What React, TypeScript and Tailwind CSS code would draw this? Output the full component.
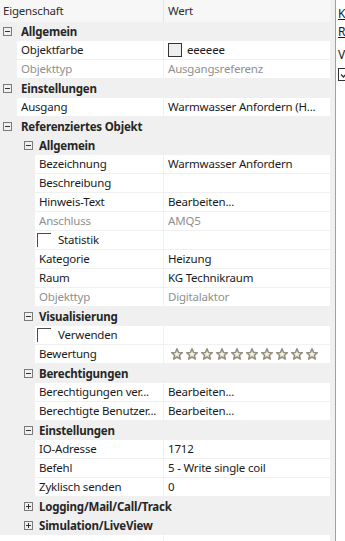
import React from "react";

function Toggle({ open = true }: { open?: boolean }) {
  return (
    <span className="relative block w-[9px] h-[9px] border border-[#7a7a7a]">
      <span className="absolute left-[1px] right-[1px] top-[3px] h-[1px] bg-[#333333]" />
      {!open && <span className="absolute top-[1px] bottom-[1px] left-[3px] w-[1px] bg-[#333333]" />}
    </span>
  );
}

function Cat({ level, label, open = true }: { level: number; label: string; open?: boolean }) {
  return (
    <div className="flex h-[19px] w-[330px] shrink-0 items-center">
      <div className={level === 1 ? "w-[35px] shrink-0 pl-[24px] flex items-center" : "w-[17px] shrink-0 pl-[3px] flex items-center"}>
        <Toggle open={open} />
      </div>
      <span className="pl-[4px] font-bold text-[#262626] whitespace-nowrap">{label}</span>
    </div>
  );
}

function Row({
  level,
  name,
  value,
  disabled,
}: {
  level: number;
  name: React.ReactNode;
  value?: React.ReactNode;
  disabled?: boolean;
}) {
  const tc = disabled ? "text-[#8f8f8f]" : "text-[#1a1a1a]";
  return (
    <div className="flex h-[19px] w-[330px] shrink-0">
      <div className={level === 1 ? "w-[35px] shrink-0" : level === 0 ? "w-[17px] shrink-0" : "w-0"} />
      <div className="flex flex-1 h-[18px] bg-white">
        <div className={`flex-1 min-w-0 pl-[4px] flex items-center whitespace-nowrap overflow-hidden ${tc}`}>{name}</div>
        <div className="w-[1px] bg-[#f0f0f0]" />
        <div className={`w-[166px] shrink-0 pl-[4px] flex items-center whitespace-nowrap overflow-hidden ${tc}`}>{value}</div>
      </div>
    </div>
  );
}

function CheckName({ label }: { label: string }) {
  return (
    <div className="flex items-start h-[18px] -ml-[2px]">
      <span className="block w-[14px] h-[14px] mt-[2px] border-t border-l border-[#4a4a4a]" />
      <span className="pl-[7px] self-center">{label}</span>
    </div>
  );
}

function Star() {
  return (
    <svg width="12" height="12" viewBox="0 0 24 24">
      <polygon
        points="12,1.5 15,8.8 22.8,9.4 16.8,14.5 18.7,22.2 12,18 5.3,22.2 7.2,14.5 1.2,9.4 9,8.8"
        fill="#e2ddd0"
        stroke="#968f7e"
        strokeWidth="3"
        strokeLinejoin="round"
      />
      <polygon
        points="12,7 13.4,10.6 17.2,10.9 14.3,13.4 15.2,17.1 12,15 8.8,17.1 9.7,13.4 6.8,10.9 10.6,10.6"
        fill="#f4f1ea"
      />
    </svg>
  );
}

export default function App() {
  return (
    <div className="flex w-[345px] h-[541px] overflow-hidden font-['Noto_Sans',sans-serif] text-[11.5px] tracking-[-0.2px] leading-none bg-[#f0f0f0]">
      <div className="w-[335px] shrink-0 flex flex-col bg-[#f0f0f0]">
        <div className="flex h-[22px] w-[330px] shrink-0 bg-[#f7f7f7] text-[#2e2e2e]">
          <div className="w-[163px] pl-[3px] flex items-center">Eigenschaft</div>
          <div className="w-[1px] bg-[#e4e4e4]" />
          <div className="pl-[4px] flex items-center">Wert</div>
        </div>
        <Cat level={0} label="Allgemein" />
        <Row
          level={0}
          name="Objektfarbe"
          value={
            <span className="flex items-center">
              <span className="block w-[14px] h-[14px] border border-[#333333] bg-[#eeeeee]" />
              <span className="pl-[5px]">eeeeee</span>
            </span>
          }
        />
        <Row level={0} name="Objekttyp" value="Ausgangsreferenz" disabled />
        <Cat level={0} label="Einstellungen" />
        <Row level={0} name="Ausgang" value="Warmwasser Anfordern (H..." />
        <Cat level={0} label="Referenziertes Objekt" />
        <Cat level={1} label="Allgemein" />
        <Row level={1} name="Bezeichnung" value="Warmwasser Anfordern" />
        <Row level={1} name="Beschreibung" value="" />
        <Row level={1} name="Hinweis-Text" value="Bearbeiten..." />
        <Row level={1} name="Anschluss" value="AMQ5" disabled />
        <Row level={1} name={<CheckName label="Statistik" />} value="" />
        <Row level={1} name="Kategorie" value="Heizung" />
        <Row level={1} name="Raum" value="KG Technikraum" />
        <Row level={1} name="Objekttyp" value="Digitalaktor" disabled />
        <Cat level={1} label="Visualisierung" />
        <Row level={1} name={<CheckName label="Verwenden" />} value="" />
        <Row
          level={1}
          name="Bewertung"
          value={
            <span className="flex gap-[3px] pl-[3px]">
              {Array.from({ length: 10 }).map((_, i) => (
                <Star key={i} />
              ))}
            </span>
          }
        />
        <Cat level={1} label="Berechtigungen" />
        <Row level={1} name="Berechtigungen ver..." value="Bearbeiten..." />
        <Row level={1} name="Berechtigte Benutzer..." value="Bearbeiten..." />
        <Cat level={1} label="Einstellungen" />
        <Row level={1} name="IO-Adresse" value="1712" />
        <Row level={1} name="Befehl" value="5 - Write single coil" />
        <Row level={1} name="Zyklisch senden" value="0" />
        <Cat level={1} label="Logging/Mail/Call/Track" open={false} />
        <Cat level={1} label="Simulation/LiveView" open={false} />
        <Row level={-1} name="" value="" />
      </div>
      <div className="w-[1px] shrink-0 bg-[#a0a0a0]" />
      <div className="flex-1 bg-white overflow-hidden flex flex-col pl-[2px] pt-[5px] text-[#1a1a1a] text-[12px] leading-[18px]">
        <span className="underline">K</span>
        <span className="underline">R</span>
        <span className="mt-[5px]">V</span>
        <span className="mt-[4px] block w-[13px] h-[13px] shrink-0 border border-[#333333] relative">
          <svg className="absolute left-[1px] top-[1px]" width="9" height="9" viewBox="0 0 9 9">
            <path d="M1 4.5 L3.5 7 L8 1.5" fill="none" stroke="#333333" strokeWidth="1.3" />
          </svg>
        </span>
      </div>
    </div>
  );
}
